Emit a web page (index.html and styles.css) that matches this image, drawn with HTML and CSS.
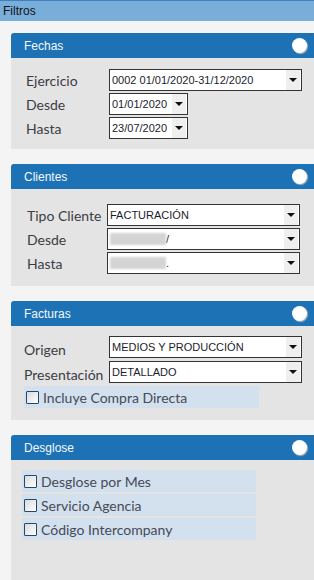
FILE: index.html
```html
<!DOCTYPE html>
<html lang="es">
<head>
    <meta charset="UTF-8">
    <meta name="viewport" content="width=device-width, initial-scale=1.0">
    <title>Filtros</title>
    <link rel="stylesheet" href="styles.css">
</head>
<body>
    <div class="topbar">Filtros</div>

    <!-- Fechas -->
    <div class="panel panel-fechas">
        <div class="panel-head">
            <span>Fechas</span>
            <span class="dot"></span>
        </div>
        <div class="panel-body">
            <div class="row">
                <label>Ejercicio</label>
                <div class="select wide"><span class="val">0002 01/01/2020-31/12/2020</span><span class="arrow"></span></div>
            </div>
            <div class="row">
                <label>Desde</label>
                <div class="select short"><span class="val">01/01/2020</span><span class="arrow"></span></div>
            </div>
            <div class="row">
                <label>Hasta</label>
                <div class="select short"><span class="val">23/07/2020</span><span class="arrow"></span></div>
            </div>
        </div>
    </div>

    <!-- Clientes -->
    <div class="panel panel-clientes">
        <div class="panel-head">
            <span>Clientes</span>
            <span class="dot"></span>
        </div>
        <div class="panel-body">
            <div class="row">
                <label>Tipo Cliente</label>
                <div class="select wide"><span class="val">FACTURACIÓN</span><span class="arrow"></span></div>
            </div>
            <div class="row">
                <label>Desde</label>
                <div class="select wide"><span class="val"><span class="blur"></span>/</span><span class="arrow"></span></div>
            </div>
            <div class="row">
                <label>Hasta</label>
                <div class="select wide"><span class="val"><span class="blur"></span>.</span><span class="arrow"></span></div>
            </div>
        </div>
    </div>

    <!-- Facturas -->
    <div class="panel panel-facturas">
        <div class="panel-head">
            <span>Facturas</span>
            <span class="dot"></span>
        </div>
        <div class="panel-body">
            <div class="row">
                <label class="low">Origen</label>
                <div class="select wide"><span class="val">MEDIOS Y PRODUCCIÓN</span><span class="arrow"></span></div>
            </div>
            <div class="row">
                <label class="low">Presentación</label>
                <div class="select wide"><span class="val">DETALLADO</span><span class="arrow"></span></div>
            </div>
            <div class="check"><span class="box"></span>Incluye Compra Directa</div>
        </div>
    </div>

    <!-- Desglose -->
    <div class="panel panel-desglose">
        <div class="panel-head">
            <span>Desglose</span>
            <span class="dot"></span>
        </div>
        <div class="panel-body">
            <div class="check"><span class="box"></span>Desglose por Mes</div>
            <div class="check"><span class="box"></span>Servicio Agencia</div>
            <div class="check"><span class="box"></span>Código Intercompany</div>
        </div>
    </div>
</body>
</html>
```

FILE: styles.css
```css
body {
    margin: 0;
    padding: 0;
    background-color: #f4f4f4;
    font-family: 'Liberation Sans', Arial, sans-serif;
    overflow: hidden;
}

.topbar {
    height: 20px;
    line-height: 20px;
    border-top: 1px solid #3f7fbd;
    background-color: #79aedb;
    color: #111;
    font-size: 12px;
    padding-left: 3px;
}

.panel {
    margin: 12px 0 15px 11px;
    background-color: #e4e4e4;
    border-top-left-radius: 3px;
}

.panel-head {
    height: 25px;
    background-color: #1d72b5;
    border-top-left-radius: 3px;
    color: #f4f8fc;
    font-size: 12px;
    display: flex;
    align-items: center;
    justify-content: space-between;
    padding-left: 13px;
}

.dot {
    width: 15px;
    height: 15px;
    margin-right: 7px;
    border-radius: 50%;
    background-color: #fff;
    box-shadow: 1px 1px 1px #a9b4be;
}

.panel-body {
    padding: 11px 12px 10px 15px;
    display: flex;
    flex-direction: column;
    gap: 2px;
}

.row {
    display: grid;
    grid-template-columns: 83px 1fr;
    align-items: center;
}

.row label {
    font-family: Lato, sans-serif;
    font-size: 14px;
    color: #3c3c44;
}

.row label.low {
    padding-top: 6px;
}

.select {
    height: 20px;
    border: 1px solid #333;
    background-color: #fff;
    display: flex;
    align-items: stretch;
    justify-content: space-between;
    font-size: 11px;
    color: #1c1c2c;
}

.select.wide {
    width: 191px;
}

.select.short {
    width: 77px;
}

.val {
    padding-left: 2px;
    line-height: 20px;
    white-space: nowrap;
    display: flex;
    align-items: center;
}

.blur {
    display: inline-block;
    width: 56px;
    height: 12px;
    background-color: #d4d4d4;
    filter: blur(1px);
}

.arrow {
    width: 14px;
    margin: 0 1px 0 0;
    background-color: #efefef;
    position: relative;
}

.arrow::after {
    content: "";
    position: absolute;
    left: 3px;
    top: 8px;
    border-left: 4px solid transparent;
    border-right: 4px solid transparent;
    border-top: 4px solid #111;
}

.panel-clientes .panel-body {
    padding: 15px 14px 12px 16px;
}

.panel-clientes .row {
    grid-template-columns: 80px 1fr;
}

.panel-facturas .panel-body {
    padding: 9px 12px 12px 13px;
}

.panel-facturas .row {
    grid-template-columns: 85px 1fr;
}

.check {
    width: 235px;
    height: 22px;
    margin-top: 1px;
    background-color: #d3e0ee;
    display: flex;
    align-items: center;
    font-family: Lato, sans-serif;
    font-size: 14px;
    color: #464a56;
}

.box {
    width: 11px;
    height: 11px;
    margin: 0 4px 0 2px;
    border: 1px solid #24476e;
    border-radius: 1px;
    background: linear-gradient(135deg, #dadada, #fff);
}

.panel-desglose {
    height: 146px;
    margin-bottom: 0;
}

.panel-desglose .panel-body {
    padding: 10px 12px 10px 11px;
}

.panel-desglose .check {
    width: 234px;
    margin-top: 0;
}
```
